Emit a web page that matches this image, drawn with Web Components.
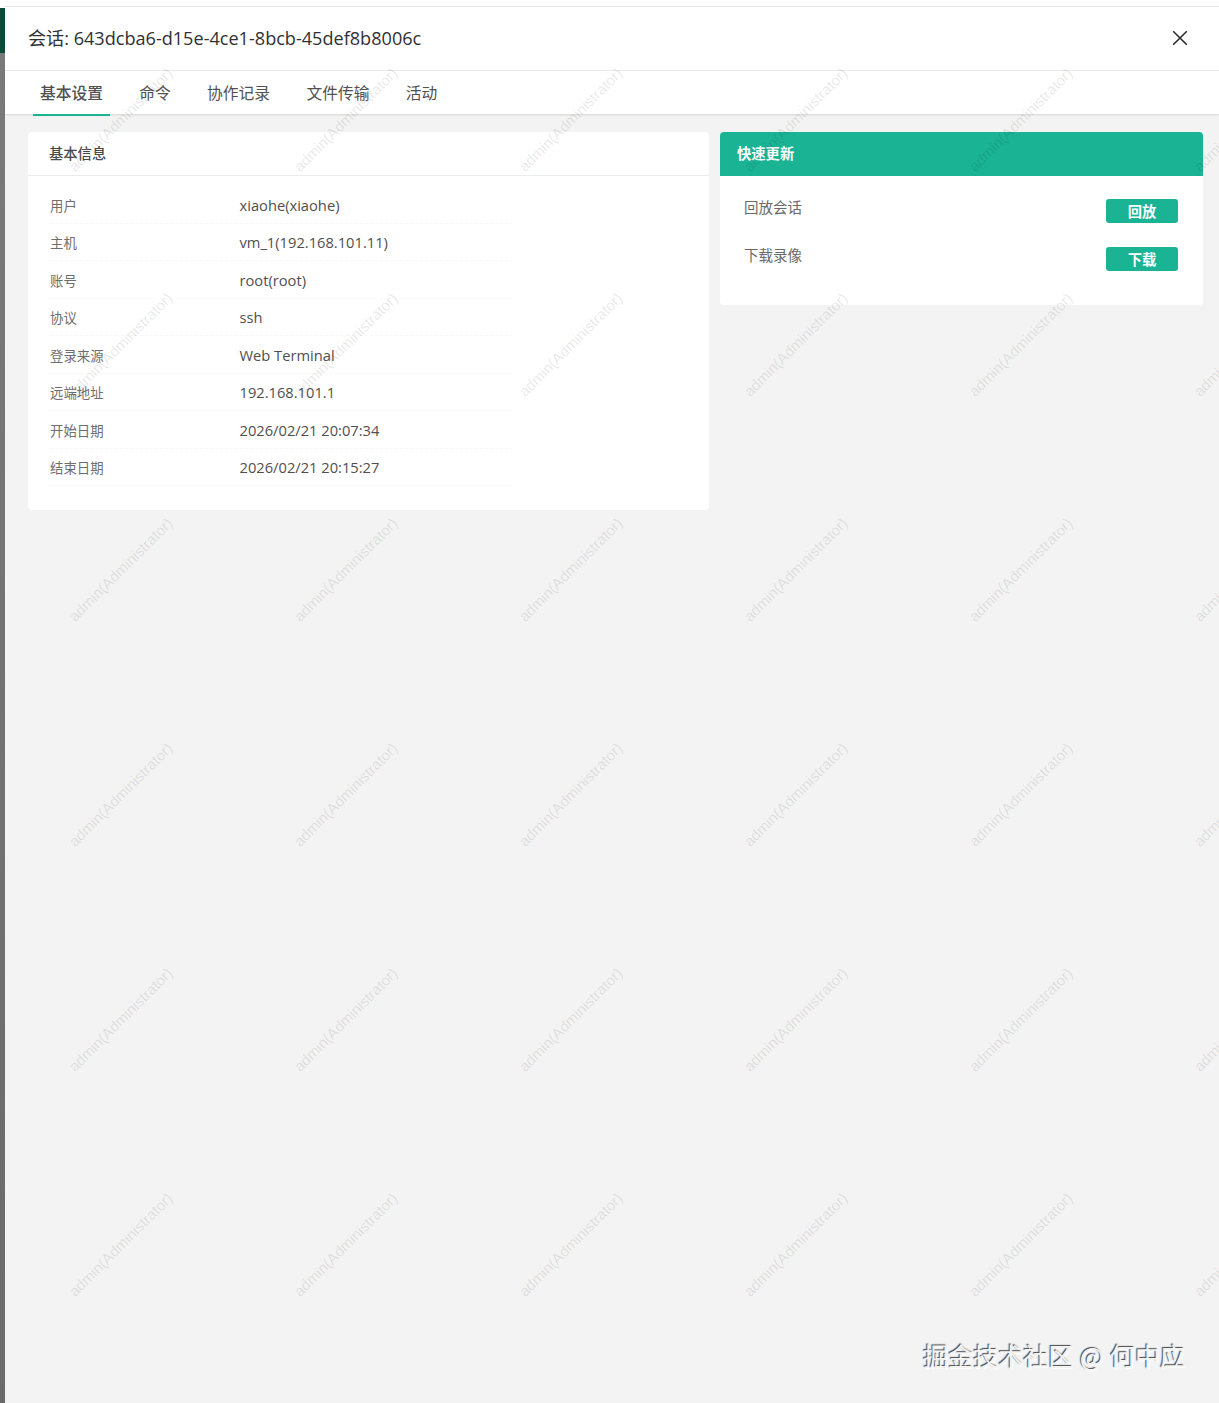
<!DOCTYPE html>
<html lang="zh">
<head>
<meta charset="utf-8">
<title>会话</title>
<style>
  html, body { margin: 0; height: 100%; }
  body { font-family: "Open Sans", "Noto Sans CJK SC", sans-serif; background: #f3f3f3; overflow: hidden; }
</style>
</head>
<body>
<session-drawer>
  <drawer-header slot="header" title-text="会话: 643dcba6-d15e-4ce1-8bcb-45def8b8006c"></drawer-header>
  <tab-bar slot="tabs">
    <tab-item active>基本设置</tab-item>
    <tab-item>命令</tab-item>
    <tab-item>协作记录</tab-item>
    <tab-item>文件传输</tab-item>
    <tab-item>活动</tab-item>
  </tab-bar>
  <info-card heading="基本信息">
    <info-row label="用户">xiaohe(xiaohe)</info-row>
    <info-row label="主机">vm_1(192.168.101.11)</info-row>
    <info-row label="账号">root(root)</info-row>
    <info-row label="协议">ssh</info-row>
    <info-row label="登录来源">Web Terminal</info-row>
    <info-row label="远端地址">192.168.101.1</info-row>
    <info-row label="开始日期">2026/02/21 20:07:34</info-row>
    <info-row label="结束日期">2026/02/21 20:15:27</info-row>
  </info-card>
  <action-card heading="快速更新">
    <action-row label="回放会话" action="回放"></action-row>
    <action-row label="下载录像" action="下载"></action-row>
  </action-card>
</session-drawer>
<watermark-layer></watermark-layer>
<site-credit>掘金技术社区 @ 何中应</site-credit>

<script>
const define = (name, css, html, init) => {
  customElements.define(name, class extends HTMLElement {
    constructor() {
      super();
      const root = this.attachShadow({ mode: 'open' });
      root.innerHTML = `<style>${css}</style>${html}`;
    }
    connectedCallback() {
      if (init) init(this, this.shadowRoot);
    }
  });
};

define('session-drawer', `
  :host { display: flex; height: 1403px; box-sizing: border-box; padding-top: 6px; background: #fff; }
  .backdrop { flex: 0 0 5px; margin-top: 2px; background: linear-gradient(#0b4a39 0, #0b4a39 45px, #7a7a7a 45px, #6a6a6a 100%); }
  .panel { flex: 1; min-width: 0; display: flex; flex-direction: column; border-top: 1px solid #e4e4e4; background: #f3f3f3; }
  .body { display: flex; align-items: flex-start; gap: 11px; padding: 18px 16px 0 23px; }
`, `
  <div class="backdrop"></div>
  <div class="panel">
    <slot name="header"></slot>
    <slot name="tabs"></slot>
    <div class="body"><slot></slot></div>
  </div>
`);

define('drawer-header', `
  :host { display: flex; align-items: center; justify-content: space-between; height: 64px; box-sizing: border-box; padding: 0 31px 2px 23px; background: #fff; border-bottom: 1px solid #ebebeb; }
  h1 { margin: 0 0 2px; font-size: 18.1px; font-weight: 400; color: #303133; }
  svg { display: block; }
`, `
  <h1></h1>
  <svg width="16" height="16" viewBox="0 0 16 16" fill="none" stroke="#262626" stroke-width="1.5"><path d="M1.2 1.2 14.8 14.8M14.8 1.2 1.2 14.8"/></svg>
`, (el, root) => { root.querySelector('h1').textContent = el.getAttribute('title-text'); });

define('tab-bar', `
  :host { display: flex; gap: 22.3px; height: 43px; box-sizing: border-box; padding-left: 28px; background: #fff; box-shadow: 0 1px 2px rgba(0,0,0,.12); position: relative; }
`, `<slot></slot>`);

define('tab-item', `
  :host { display: block; padding: 0 7px; font-size: 15.75px; line-height: 44px; color: #515151; height: 45px; box-sizing: border-box; }
  :host([active]) { border-bottom: 2px solid #1ab394; font-weight: 500; color: #505050; }
`, `<slot></slot>`);

define('info-card', `
  :host { display: block; flex: 0 0 681px; height: 378px; background: #fff; border-radius: 4px; }
  h2 { margin: 0; height: 44px; box-sizing: border-box; padding: 0 21px; font-size: 14.3px; font-weight: 500; line-height: 43px; color: #4a4a4a; border-bottom: 1px solid #e9ecef; }
  .rows { padding: 10.3px 0 0 22px; }
`, `<h2></h2><div class="rows"><slot></slot></div>`,
(el, root) => { root.querySelector('h2').textContent = el.getAttribute('heading'); });

define('info-row', `
  :host { display: flex; align-items: center; width: 463px; height: 37.5px; font-size: 14.7px; color: #4f4f4f; border-bottom: 1px dashed #f8f8f8; box-sizing: border-box; }
  .label { flex: 0 0 189.5px; font-size: 13.4px; color: #6e6e6e; }
`, `<span class="label"></span><span><slot></slot></span>`,
(el, root) => { root.querySelector('.label').textContent = el.getAttribute('label'); });

define('action-card', `
  :host { display: block; flex: 0 0 483px; height: 173px; background: #fff; border-radius: 4px; overflow: hidden; }
  h2 { margin: 0; height: 44px; padding: 0 17px; font-size: 14.3px; font-weight: 700; line-height: 44px; color: #fff; background: #1ab394; }
  .rows { padding: 9px 25px 0 24px; display: grid; gap: 0; }
`, `<h2></h2><div class="rows"><slot></slot></div>`,
(el, root) => { root.querySelector('h2').textContent = el.getAttribute('heading'); });

define('action-row', `
  :host { display: flex; align-items: center; justify-content: space-between; height: 48px; font-size: 14.5px; color: #6a6a6a; }
  button { width: 72px; height: 24px; margin-top: 4px; padding: 0 0 2px; border: 0; border-radius: 3px; background: #1ab394; color: #fff; font: 600 14.3px "Open Sans", "Noto Sans CJK SC", sans-serif; }
  span { margin-top: -6px; }
`, `<span></span><button type="button"></button>`,
(el, root) => {
  root.querySelector('span').textContent = el.getAttribute('label');
  root.querySelector('button').textContent = el.getAttribute('action');
});

define('watermark-layer', `
  :host { position: absolute; left: 0; top: 0; width: 1219px; height: 1403px; overflow: hidden; pointer-events: none; display: grid; grid-template-columns: repeat(6, 225px); grid-auto-rows: 225px; padding: 7px 0 0 8px; box-sizing: border-box; }
  span { display: flex; align-items: center; justify-content: center; white-space: nowrap; font: 15px "Liberation Sans", sans-serif; color: rgba(0,0,0,.1); transform: rotate(-45deg); }
`, ``, (el, root) => {
  for (let i = 0; i < 36; i++) {
    const s = document.createElement('span');
    s.textContent = 'admin(Administrator)';
    root.appendChild(s);
  }
});

define('site-credit', `
  :host { position: absolute; right: 34px; top: 1337px; font: 25px/36px "Noto Sans CJK SC", sans-serif; word-spacing: 1px; color: #f3f3f3; text-shadow: -1px -1px 1px #444, 1px 1px 1px #fff; white-space: nowrap; }
`, `<slot></slot>`);
</script>
</body>
</html>
